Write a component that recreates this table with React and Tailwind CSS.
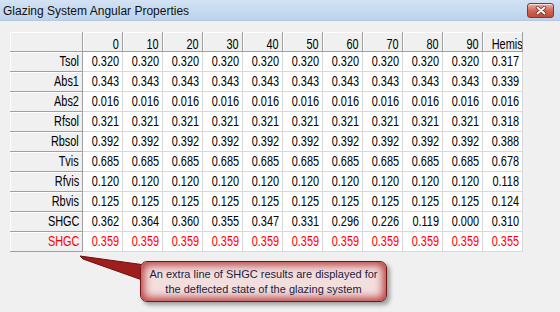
const ANGLES = ["0", "10", "20", "30", "40", "50", "60", "70", "80", "90", "Hemis"];

const fill = (v, hemis) => [...Array(10).fill(v), hemis];

const ROWS = [
  { label: "Tsol", values: fill("0.320", "0.317") },
  { label: "Abs1", values: fill("0.343", "0.339") },
  { label: "Abs2", values: fill("0.016", "0.016") },
  { label: "Rfsol", values: fill("0.321", "0.318") },
  { label: "Rbsol", values: fill("0.392", "0.388") },
  { label: "Tvis", values: fill("0.685", "0.678") },
  { label: "Rfvis", values: fill("0.120", "0.118") },
  { label: "Rbvis", values: fill("0.125", "0.124") },
  { label: "SHGC", values: ["0.362", "0.364", "0.360", "0.355", "0.347", "0.331", "0.296", "0.226", "0.119", "0.000", "0.310"] },
  { label: "SHGC", values: fill("0.359", "0.355"), red: true },
];

function Txt({ children }) {
  // grid font is narrow, squeeze Arial horizontally
  return <span className="inline-block origin-right scale-x-[0.78]">{children}</span>;
}

function HeadCell({ children, top }) {
  return (
    <div
      className={`h-5 bg-[#f0f0f0] border-r border-b border-[#a0a0a0] shadow-[inset_1px_1px_0_#ffffff] text-right pr-[3px] overflow-hidden ${
        top ? "pt-[4px] leading-[16px]" : "leading-[19px]"
      }`}
    >
      {children && <Txt>{children}</Txt>}
    </div>
  );
}

function DataCell({ children, red }) {
  return (
    <div className={`h-5 bg-white border-r border-b border-[#d8d8d8] text-right pr-[3px] leading-[19px] ${red ? "text-[#ff0000]" : "text-black"}`}>
      <Txt>{children}</Txt>
    </div>
  );
}

export default function App() {
  return (
    <div className="relative w-[560px] h-[312px] overflow-hidden bg-[#f0f0f0] font-['Liberation_Sans',Arial,sans-serif]">
      <div className="h-[21px] flex items-center bg-gradient-to-b from-[#d3e2f4] to-[#bcd3ec] border-b border-[#b4c8e0]">
        <span className="pl-[3px] pt-[1px] text-[12px] text-[#111]">Glazing System Angular Properties</span>
        <div className="ml-auto mr-[6px] w-[27px] h-[15px] rounded-[3px] border border-[#8a3628] bg-gradient-to-b from-[#eeb3a4] via-[#d0685a] to-[#c04a3a] flex items-center justify-center shadow-[inset_0_1px_0_rgba(255,255,255,0.6)]">
          <svg width="12" height="9" viewBox="0 0 12 9">
            <path d="M2.5 1.5 L9.5 7.5 M9.5 1.5 L2.5 7.5" stroke="#6a2218" strokeWidth="3.4" strokeLinecap="round" />
            <path d="M2.5 1.5 L9.5 7.5 M9.5 1.5 L2.5 7.5" stroke="#ffffff" strokeWidth="2" strokeLinecap="round" />
          </svg>
        </div>
      </div>

      <div className="pt-[11px] pl-[10px]">
        <div className="grid grid-cols-[73px_repeat(11,40px)] text-[14px]">
          <HeadCell top />
          {ANGLES.map((a) => (
            <HeadCell key={a} top>{a}</HeadCell>
          ))}
          {ROWS.map((r, i) => (
            <div key={i} className="contents">
              <div className={r.red ? "text-[#ff0000]" : "text-black"}>
                <HeadCell>{r.label}</HeadCell>
              </div>
              {r.values.map((v, j) => (
                <DataCell key={j} red={r.red}>{v}</DataCell>
              ))}
            </div>
          ))}
        </div>
      </div>

      {/* callout */}
      <svg className="absolute left-0 top-0" width="560" height="312">
        <polygon points="80,256 145,265 145,281 83,259" fill="#9e1d1d" stroke="#6e0f0f" strokeWidth="1" />
      </svg>
      <div className="absolute left-[140px] top-[261px] w-[247px] h-[41px] rounded-[7px] border-[1.5px] border-[#7a1414] bg-[#f3dede] shadow-[inset_0_0_9px_3px_#b53a3a,3px_3px_4px_rgba(0,0,0,0.35)] flex flex-col items-center justify-center whitespace-nowrap text-[11px] leading-[15px] text-[#1c1c3c]">
        <span>An extra line of SHGC results are displayed for</span>
        <span>the deflected state of the glazing system</span>
      </div>
    </div>
  );
}
